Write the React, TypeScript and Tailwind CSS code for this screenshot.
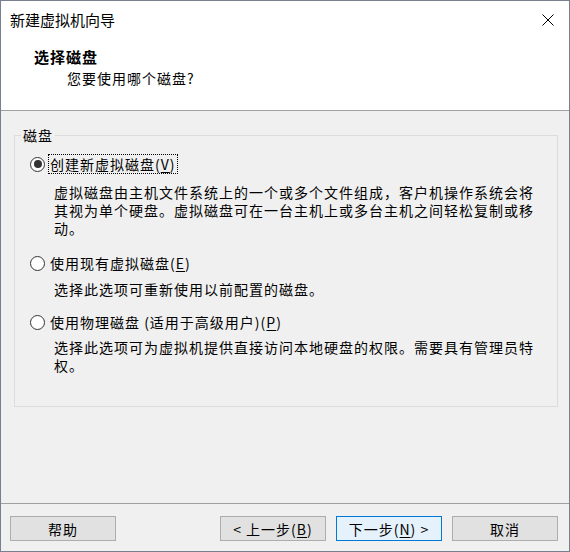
import React from "react";

function Radio({ checked }: { checked?: boolean }) {
  return (
    <span className="flex h-[15px] w-[15px] shrink-0 items-center justify-center rounded-full border border-[#333333] bg-white">
      {checked && <span className="h-[8px] w-[8px] rounded-full bg-[#333333]" />}
    </span>
  );
}

function Button({ children, primary }: { children: React.ReactNode; primary?: boolean }) {
  return (
    <button
      className={
        primary
          ? "flex h-[25px] w-[106px] items-center justify-center border border-[#0078d7] bg-[#e5f1fb] text-[14px] leading-none tracking-[1px] text-black"
          : "flex h-[25px] w-[106px] items-center justify-center border border-[#adadad] bg-[#e1e1e1] text-[14px] leading-none tracking-[1px] text-black"
      }
    >
      {children}
    </button>
  );
}

export default function App() {
  return (
    <div className="flex h-[552px] w-[570px] flex-col border border-[#77808d] bg-white font-['Noto_Sans_CJK_SC',sans-serif] text-black">
      {/* Title bar */}
      <div className="flex h-[38px] items-center justify-between pl-[9px] pr-[15px]">
        <span className="text-[15px] leading-[20px]">新建虚拟机向导</span>
        <svg width="12" height="12" viewBox="0 0 12 12" className="shrink-0">
          <path d="M0.5 0.5 L11.5 11.5 M11.5 0.5 L0.5 11.5" stroke="#000" strokeWidth="1" fill="none" />
        </svg>
      </div>

      {/* Header */}
      <div className="h-[72px] border-b border-[#a0a0a0] pt-[8px]">
        <div className="pl-[33px] text-[15px] font-bold leading-[20px] tracking-[1px]">选择磁盘</div>
        <div className="mt-[1px] pl-[66px] text-[14px] leading-[20px] tracking-[1px]">您要使用哪个磁盘?</div>
      </div>

      {/* Body */}
      <div className="flex flex-1 flex-col bg-[#f0f0f0] text-[14px] tracking-[1px]">
        <div className="relative ml-[13px] mr-[11px] mt-[24px] border border-[#dcdcdc] pb-[32px] pt-[18px]">
          <span className="absolute -top-[9px] left-[6px] bg-[#f0f0f0] px-[2px] leading-[17px]">磁盘</span>

          <div className="flex h-[20px] items-center pl-[15px]">
            <Radio checked />
            <span className="ml-[3px] border border-dotted border-black px-[1px] leading-[18px]">
              创建新虚拟磁盘(<u className="underline-offset-2">V</u>)
            </span>
          </div>
          <p className="mt-[9px] whitespace-nowrap pl-[39px] leading-[18px]">
            虚拟磁盘由主机文件系统上的一个或多个文件组成，客户机操作系统会将
            <br />
            其视为单个硬盘。虚拟磁盘可在一台主机上或多台主机之间轻松复制或移
            <br />
            动。
          </p>

          <div className="mt-[16px] flex h-[20px] items-center pl-[15px]">
            <Radio />
            <span className="ml-[3px] border border-dotted border-transparent px-[1px] leading-[18px]">
              使用现有虚拟磁盘(<u className="underline-offset-2">E</u>)
            </span>
          </div>
          <p className="mt-[7px] whitespace-nowrap pl-[39px] leading-[18px]">选择此选项可重新使用以前配置的磁盘。</p>

          <div className="mt-[14px] flex h-[20px] items-center pl-[15px]">
            <Radio />
            <span className="ml-[3px] border border-dotted border-transparent px-[1px] leading-[18px]">
              使用物理磁盘 (适用于高级用户)(<u className="underline-offset-2">P</u>)
            </span>
          </div>
          <p className="mt-[6px] whitespace-nowrap pl-[39px] leading-[18px]">
            选择此选项可为虚拟机提供直接访问本地硬盘的权限。需要具有管理员特
            <br />
            权。
          </p>
        </div>

        <div className="flex-1" />

        {/* Footer */}
        <div className="h-px bg-[#a0a0a0]" />
        <div className="flex items-center gap-[10px] pb-[10px] pl-[9px] pr-[11px] pt-[12px]">
          <Button>帮助</Button>
          <div className="flex-1" />
          <Button>
            &lt; 上一步(<u className="underline-offset-2">B</u>)
          </Button>
          <Button primary>
            下一步(<u className="underline-offset-2">N</u>) &gt;
          </Button>
          <Button>取消</Button>
        </div>
      </div>
    </div>
  );
}
